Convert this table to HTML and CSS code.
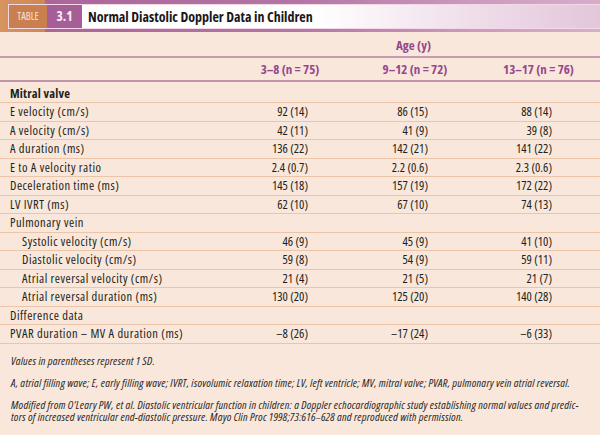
FILE: index.html
```html
<!DOCTYPE html>
<html>
<head>
<meta charset="utf-8">
<link rel="stylesheet" href="styles.css">
</head>
<body>
<div class="page">
  <div class="band">
    <div class="tag"><span class="tag-label">TABLE</span><span class="tag-num">3.1</span></div>
    <div class="title">Normal Diastolic Doppler Data in Children</div>
  </div>
  <div class="grid age-row">
    <div></div>
    <div class="age">Age (y)</div>
  </div>
  <div class="grid head-row">
    <div></div>
    <div class="hc">3–8 (n = 75)</div>
    <div class="hc">9–12 (n = 72)</div>
    <div class="hc">13–17 (n = 76)</div>
  </div>
  <div class="grid row first"><div class="lab bold">Mitral valve</div><div></div><div></div><div></div></div>
  <div class="grid row"><div class="lab">E velocity (cm/s)</div><div class="n1">92 (14)</div><div class="n2">86 (15)</div><div class="n3">88 (14)</div></div>
  <div class="grid row"><div class="lab">A velocity (cm/s)</div><div class="n1">42 (11)</div><div class="n2">41 (9)</div><div class="n3">39 (8)</div></div>
  <div class="grid row"><div class="lab">A duration (ms)</div><div class="n1">136 (22)</div><div class="n2">142 (21)</div><div class="n3">141 (22)</div></div>
  <div class="grid row"><div class="lab">E to A velocity ratio</div><div class="n1">2.4 (0.7)</div><div class="n2">2.2 (0.6)</div><div class="n3">2.3 (0.6)</div></div>
  <div class="grid row"><div class="lab">Deceleration time (ms)</div><div class="n1">145 (18)</div><div class="n2">157 (19)</div><div class="n3">172 (22)</div></div>
  <div class="grid row"><div class="lab">LV IVRT (ms)</div><div class="n1">62 (10)</div><div class="n2">67 (10)</div><div class="n3">74 (13)</div></div>
  <div class="grid row"><div class="lab">Pulmonary vein</div><div></div><div></div><div></div></div>
  <div class="grid row"><div class="lab sub">Systolic velocity (cm/s)</div><div class="n1">46 (9)</div><div class="n2">45 (9)</div><div class="n3">41 (10)</div></div>
  <div class="grid row"><div class="lab sub">Diastolic velocity (cm/s)</div><div class="n1">59 (8)</div><div class="n2">54 (9)</div><div class="n3">59 (11)</div></div>
  <div class="grid row"><div class="lab sub">Atrial reversal velocity (cm/s)</div><div class="n1">21 (4)</div><div class="n2">21 (5)</div><div class="n3">21 (7)</div></div>
  <div class="grid row"><div class="lab sub">Atrial reversal duration (ms)</div><div class="n1">130 (20)</div><div class="n2">125 (20)</div><div class="n3">140 (28)</div></div>
  <div class="grid row"><div class="lab">Difference data</div><div></div><div></div><div></div></div>
  <div class="grid row"><div class="lab">PVAR duration – MV A duration (ms)</div><div class="n1">–8 (26)</div><div class="n2">–17 (24)</div><div class="n3">–6 (33)</div></div>
  <div class="notes">
    <p class="note note-first">Values in parentheses represent 1 SD.</p>
    <p class="note note-second">A, atrial filling wave; E, early filling wave; IVRT, isovolumic relaxation time; LV, left ventricle; MV, mitral valve; PVAR, pulmonary vein atrial reversal.</p>
    <p class="note">Modified from O’Leary PW, et al. Diastolic ventricular function in children: a Doppler echocardiographic study establishing normal values and predic-<br>tors of increased ventricular end-diastolic pressure. Mayo Clin Proc 1998;73:616–628 and reproduced with permission.</p>
  </div>
</div>
</body>
</html>
```

FILE: styles.css
```css
* { box-sizing: border-box; }
html, body { margin: 0; padding: 0; }
body {
  width: 600px;
  height: 435px;
  overflow: hidden;
  background: #f8e7da;
  font-family: "Open Sans", "Liberation Sans", sans-serif;
  font-stretch: 75%;
  color: #231f20;
}
.page { width: 600px; }

.band {
  height: 32px;
  padding: 4px 0 3px 8px;
  display: flex;
  background: linear-gradient(to right, #d6945f 0, #cf8754 45px, #ab659b 45px, #b476a6 50%, #cc9bbf 80%, #d8adcc 100%);
}
.tag {
  display: flex;
  border: 1px solid #f3d9e4;
  border-right: none;
  height: 25px;
}
.tag-label {
  width: 38px;
  background: #c97f4f;
  color: #f6e3d6;
  font-size: 10.5px;
  line-height: 23px;
  text-align: center;
}
.tag-num {
  width: 35px;
  background: #a55f96;
  color: #fbeef6;
  font-weight: bold;
  font-size: 13.5px;
  line-height: 23px;
  text-align: center;
}
.title {
  flex: 1;
  height: 25px;
  border-top: 1px solid #f3d9e4;
  border-bottom: 1px solid #f3d9e4;
  background: linear-gradient(to right, #ffffff 0, #ffffff 45%, #efdeea 75%, #e3c6da 100%);
  font-weight: bold;
  font-size: 14px;
  line-height: 23px;
  padding-left: 6px;
  color: #1a1718;
}

.grid {
  display: grid;
  grid-template-columns: 230px 120px 130px 117px;
}
.age-row {
  height: 26px;
  border-bottom: 2px solid #c89aaf;
  align-items: center;
}
.age {
  grid-column: 2 / 5;
  text-align: center;
  color: #97488d;
  font-weight: bold;
  font-size: 13px;
  padding-top: 2px;
}
.head-row {
  height: 24px;
  border-bottom: 2px solid #c194aa;
  align-items: center;
}
.hc {
  text-align: center;
  color: #97488d;
  font-weight: bold;
  font-size: 13px;
}
.row {
  height: 18.5px;
  border-bottom: 1px solid #ecc5a8;
  align-items: center;
  font-size: 12.5px;
  line-height: 17px;
}
.row.first { height: 21px; padding-top: 2px; }
.lab { padding-left: 10px; white-space: nowrap; letter-spacing: 0.5px; }
.lab.sub { padding-left: 22px; }
.lab.bold { font-weight: bold; letter-spacing: 0.2px; }
.n1, .n2, .n3 { text-align: right; white-space: nowrap; }
.n1 { padding-right: 42px; }
.n2 { padding-right: 52px; }
.n3 { padding-right: 45px; }

.notes { padding: 11px 0 0 11px; }
.note {
  margin: 0 0 10px 0;
  font-style: italic;
  font-size: 11.5px;
  letter-spacing: 0.2px;
  line-height: 11.7px;
  color: #2b2728;
  white-space: nowrap;
}
.note-first { margin-bottom: 11px; }
```
